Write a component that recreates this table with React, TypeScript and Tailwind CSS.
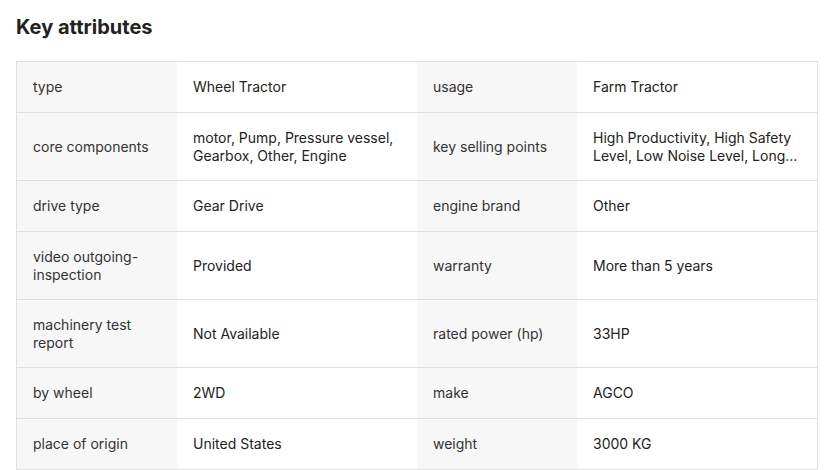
import React from "react";

const rows: [string, string, string, string][] = [
  ["type", "Wheel Tractor", "usage", "Farm Tractor"],
  [
    "core components",
    "motor, Pump, Pressure vessel, Gearbox, Other, Engine",
    "key selling points",
    "High Productivity, High Safety Level, Low Noise Level, Long...",
  ],
  ["drive type", "Gear Drive", "engine brand", "Other"],
  ["video outgoing-inspection", "Provided", "warranty", "More than 5 years"],
  ["machinery test report", "Not Available", "rated power (hp)", "33HP"],
  ["by wheel", "2WD", "make", "AGCO"],
  ["place of origin", "United States", "weight", "3000 KG"],
];

function Label({ text, last }: { text: string; last: boolean }) {
  return (
    <div
      className={`flex items-center bg-[#f7f7f7] px-4 py-4 text-[#333333] ${
        last ? "min-h-[50px]" : "min-h-[51px] border-b border-[#e0e0e0]"
      }`}
    >
      <span>{text}</span>
    </div>
  );
}

function Value({ text, last }: { text: string; last: boolean }) {
  return (
    <div
      className={`flex items-center bg-white px-4 py-4 text-[#222222] ${
        last ? "min-h-[50px]" : "min-h-[51px] border-b border-[#e0e0e0]"
      }`}
    >
      <span>{text}</span>
    </div>
  );
}

export default function App() {
  return (
    <div
      className="min-h-[470px] w-[830px] bg-white pl-4 pt-[13px]"
      style={{ fontFamily: "Inter, 'Noto Sans', sans-serif" }}
    >
      <h2 className="text-[20px] font-bold leading-[28px] text-[#222222]">Key attributes</h2>
      <div className="mt-[20px] grid w-[802px] grid-cols-[160px_240px_160px_240px] border border-[#e0e0e0] text-[14px] leading-[17.5px]">
        {rows.map((r, i) => {
          const last = i === rows.length - 1;
          return (
            <React.Fragment key={i}>
              <Label text={r[0]} last={last} />
              <Value text={r[1]} last={last} />
              <Label text={r[2]} last={last} />
              <Value text={r[3]} last={last} />
            </React.Fragment>
          );
        })}
      </div>
    </div>
  );
}
